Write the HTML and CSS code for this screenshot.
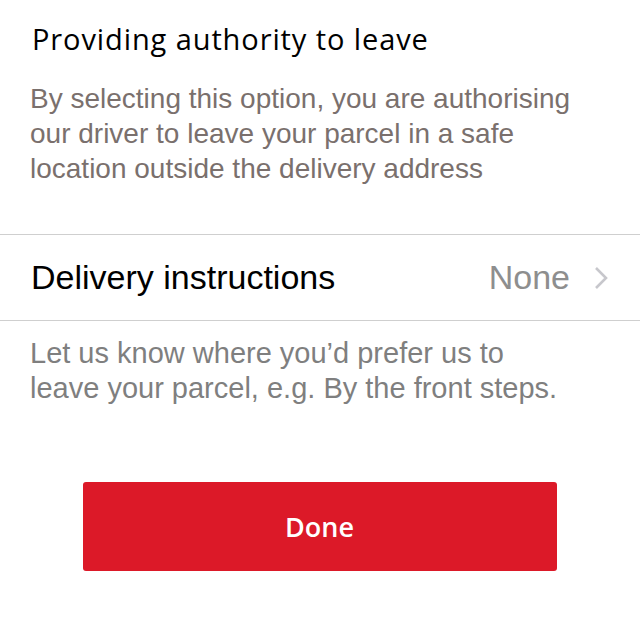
FILE: index.html
```html
<!DOCTYPE html>
<html lang="en">
<head>
<meta charset="utf-8">
<link rel="stylesheet" href="styles.css">
</head>
<body>
<main class="sheet">
  <section class="intro">
    <h1 class="title">Providing authority to leave</h1>
    <p class="desc">By selecting this option, you are authorising our driver to leave your parcel in a safe location outside the delivery address</p>
  </section>
  <div class="row">
    <span class="row-label">Delivery instructions</span>
    <span class="row-value">None</span>
    <svg class="chevron" width="14" height="24" viewBox="0 0 14 24"><path d="M2 2 L12 12 L2 22" fill="none" stroke="#c7c7cc" stroke-width="2.6"/></svg>
  </div>
  <p class="hint">Let us know where you’d prefer us to leave your parcel, e.g. By the front steps.</p>
  <div class="actions">
    <button class="done">Done</button>
  </div>
</main>
</body>
</html>
```

FILE: styles.css
```css
html, body {
  margin: 0;
  padding: 0;
  background: #fff;
}
.sheet {
  width: 640px;
  font-family: "Liberation Sans", Arial, sans-serif;
}
.intro {
  padding: 21px 50px 0 30px;
  height: 234px;
  box-sizing: border-box;
}
.title {
  margin: 0 0 0 2px;
  font-family: "Open Sans", "Lato", sans-serif;
  font-weight: 400;
  font-size: 29px;
  line-height: 36px;
  letter-spacing: 0.9px;
  color: #000;
}
.desc {
  margin: 24px 0 0;
  font-size: 28px;
  line-height: 35px;
  color: #7a706d;
}
.row {
  border-top: 1px solid #cfcfcf;
  border-bottom: 1px solid #cfcfcf;
  height: 85px;
  display: flex;
  align-items: center;
  padding: 0 32px 0 31px;
}
.row-label {
  flex: 1;
  font-size: 34px;
  color: #000;
}
.row-value {
  font-size: 34px;
  color: #8e8e8e;
  margin-right: 24px;
}
.chevron {
  display: block;
}
.hint {
  margin: 15px 74px 0 30px;
  font-size: 29px;
  line-height: 35px;
  color: #7f7f7f;
}
.actions {
  display: flex;
  justify-content: center;
  padding-top: 76px;
}
.done {
  width: 474px;
  height: 89px;
  margin-left: -1px;
  border: none;
  border-radius: 3px;
  background: #dc1928;
  color: #fff;
  font-family: "Open Sans", "Lato", sans-serif;
  font-weight: 600;
  font-size: 27px;
}
```
